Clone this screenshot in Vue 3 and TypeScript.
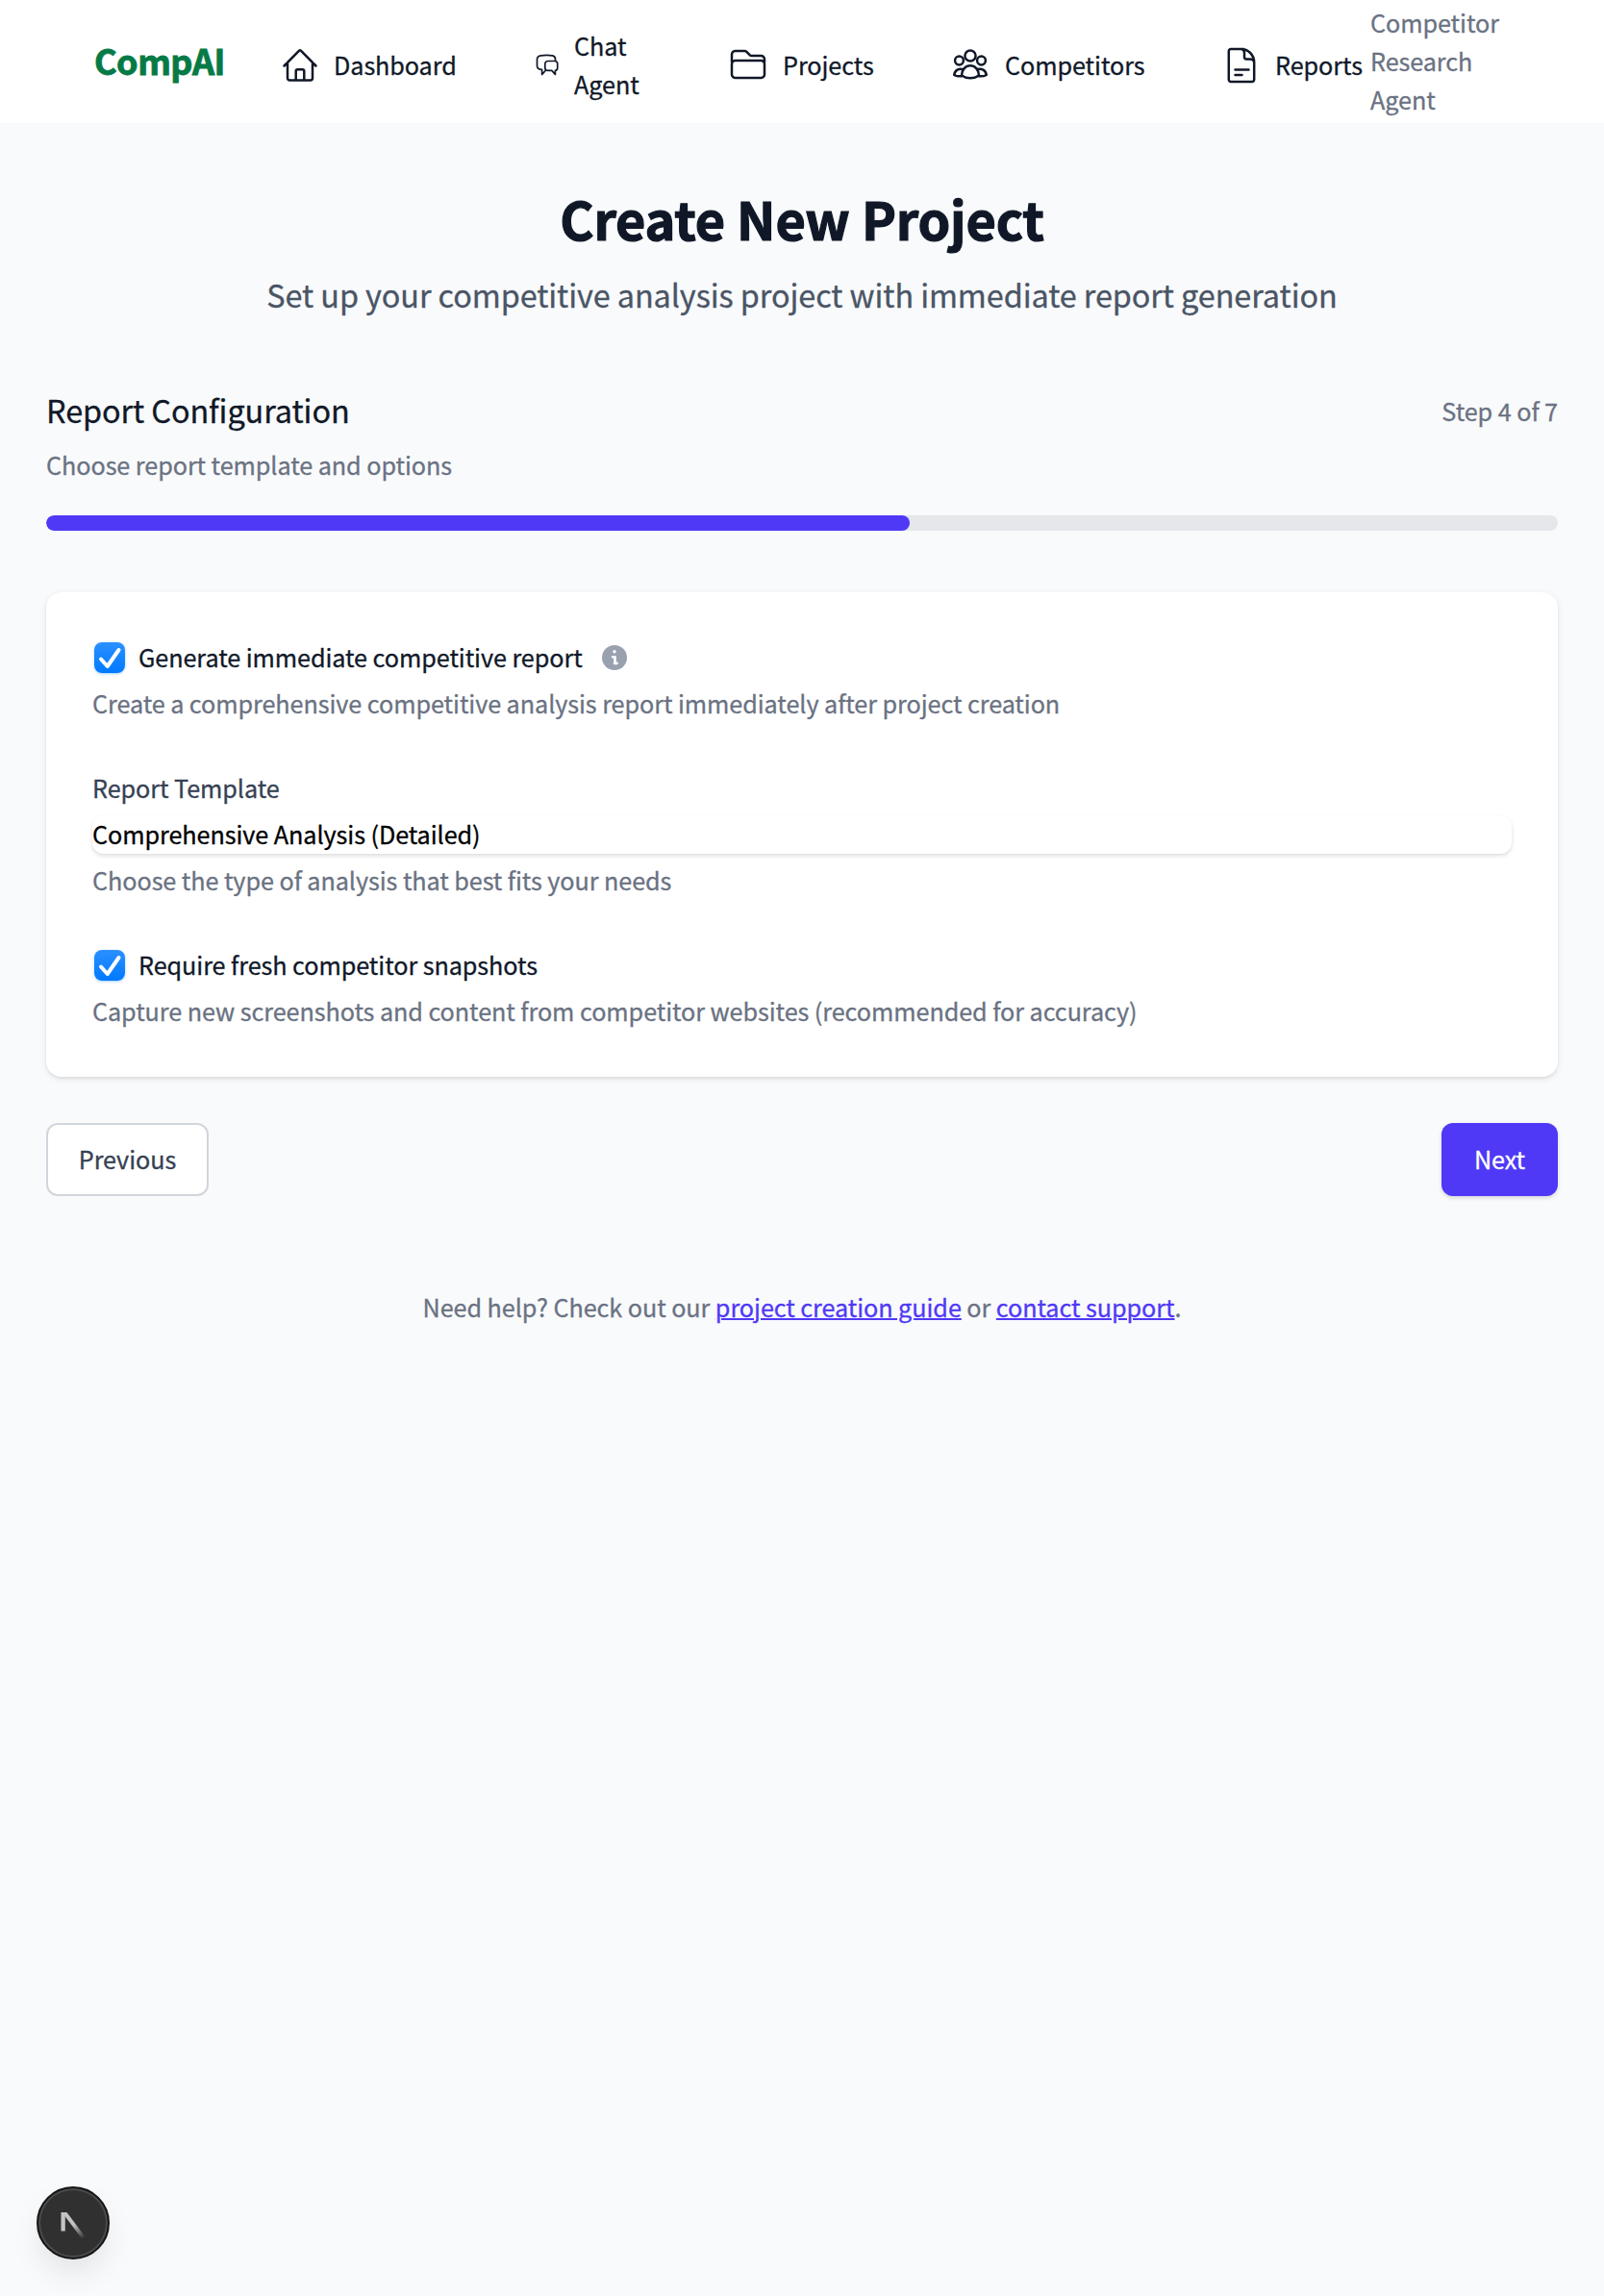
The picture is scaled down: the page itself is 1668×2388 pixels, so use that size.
<script setup lang="ts">
import { ref, computed } from 'vue'

const step = ref(4)
const total = 7
const progress = computed(() => `${(step.value / total) * 100}%`)
const generateReport = ref(true)
const freshSnapshots = ref(true)
</script>

<template>
  <div class="page">
    <header class="bar">
      <a class="logo">CompAI</a>
      <nav class="nav">
        <a class="item dashboard">
          <svg width="36" height="36" viewBox="0 0 36 36"><path d="M1.5 18.5 16.9 2.8a1.6 1.6 0 0 1 2.2 0L34.500 18.500M5 15v16.200a2.200 2.200 0 0 0 2.200 2.200h21.600a2.200 2.200 0 0 0 2.200-2.200V15M13.700 33V24a1.800 1.800 0 0 1 1.800-1.800h5a1.800 1.800 0 0 1 1.800 1.800v9" /></svg>
          <span>Dashboard</span>
        </a>
        <a class="item chat">
          <svg width="24" height="24" viewBox="0 0 24 24"><path d="M20.500 7.500V5.500c0-2-1-3.400-3-3.700a42 42 0 0 0-12 0c-2.400.3-4 1.800-4 3.900v6.600c0 2.100 1.500 3.600 3.500 3.900l1.600.2v5.100l3.200-3.600M13 7.500h7c1.600 0 2.700 1.200 2.700 2.700v4.500c0 1.500-.9 2.600-2.300 2.700v4l-3.600-4h-4c-1.800 0-3-1.100-3-2.700v-4.500c0-1.500 1.300-2.700 3.200-2.700Z" /></svg>
          <span>Chat<br />Agent</span>
        </a>
        <a class="item projects">
          <svg width="38" height="36" viewBox="0 0 38 36"><path d="M2 14.500V6.500a3.500 3.500 0 0 1 3.500-3.500h9.800a3 3 0 0 1 2.100.9l3.200 3.200a3 3 0 0 0 2.100.9h9.800A3.500 3.500 0 0 1 36 11.500v3M5.500 13h27a3.500 3.500 0 0 1 3.500 3.500V27.500a3.500 3.500 0 0 1-3.500 3.500h-27A3.500 3.500 0 0 1 2 27.500v-11A3.500 3.500 0 0 1 5.500 13Z" /></svg>
          <span>Projects</span>
        </a>
        <a class="item competitors">
          <svg width="38" height="36" viewBox="0 0 38 36"><circle cx="19" cy="8" r="5.600" /><circle cx="7.500" cy="13" r="4.400" /><circle cx="30.500" cy="13" r="4.400" /><path d="M10 28.500c.3-6.200 4-10.200 9-10.200s8.700 4 9 10.200c-5.400 3.800-12.600 3.800-18 0ZM12.200 22.200C7 20.500 3 23 2.200 28c2.500 1.300 5 1.600 7.800 1.200M25.800 22.200C31 20.500 35 23 35.800 28c-2.500 1.300-5 1.600-7.800 1.200" /></svg>
          <span>Competitors</span>
        </a>
        <a class="item reports">
          <svg width="30" height="38" viewBox="0 0 30 38"><path d="M17 2H4a2.200 2.200 0 0 0-2.200 2.200v29.600A2.200 2.200 0 0 0 4 36h22a2.200 2.200 0 0 0 2.200-2.200V16C28.200 8 22 2 14.500 2c2.200 0 3.500 1.600 3.500 3.800v4.500a2.200 2.200 0 0 0 2.200 2.200h3.600c2.300 0 4.400 1.600 4.400 4M8.500 23.500h14M8.500 29h7" /></svg>
          <span>Reports</span>
        </a>
      </nav>
      <div class="tagline">Competitor<br />Research<br />Agent</div>
    </header>

    <main class="main">
      <h1>Create New Project</h1>
      <p class="sub">Set up your competitive analysis project with immediate report generation</p>

      <section class="steps">
        <div class="steps-head">
          <h2>Report Configuration</h2>
          <span class="count">Step {{ step }} of {{ total }}</span>
        </div>
        <p class="muted">Choose report template and options</p>
        <div class="track"><div class="fill" :style="{ width: progress }"></div></div>
      </section>

      <section class="card">
        <div class="field">
          <label class="check">
            <input v-model="generateReport" type="checkbox" />
            <span class="box"><svg v-if="generateReport" width="32" height="32" viewBox="0 0 32 32"><path d="M7 17.500 13.700 25 25.500 8" /></svg></span>
            <span class="ctext">Generate immediate competitive report</span>
            <svg class="info" width="26" height="26" viewBox="0 0 26 26"><circle cx="13" cy="13" r="13" /><path d="M11 12.200h2.500v6.600M13 18.900h2.500" /><circle class="dot" cx="13" cy="6.700" r="1.700" /></svg>
          </label>
          <p class="muted">Create a comprehensive competitive analysis report immediately after project creation</p>
        </div>
        <div class="field">
          <p class="flabel">Report Template</p>
          <div class="select">Comprehensive Analysis (Detailed)</div>
          <p class="muted">Choose the type of analysis that best fits your needs</p>
        </div>
        <div class="field">
          <label class="check">
            <input v-model="freshSnapshots" type="checkbox" />
            <span class="box"><svg v-if="freshSnapshots" width="32" height="32" viewBox="0 0 32 32"><path d="M7 17.500 13.700 25 25.500 8" /></svg></span>
            <span class="ctext">Require fresh competitor snapshots</span>
          </label>
          <p class="muted">Capture new screenshots and content from competitor websites (recommended for accuracy)</p>
        </div>
      </section>

      <div class="actions">
        <button class="prev">Previous</button>
        <button class="next">Next</button>
      </div>

      <p class="help">Need help? Check out our <a>project creation guide</a> or <a>contact support</a>.</p>
    </main>

    <button class="dev" aria-label="Open dev tools">
      <svg width="40" height="40" viewBox="0 0 40 40">
        <defs>
          <linearGradient id="slash" gradientUnits="userSpaceOnUse" x1="16" y1="16" x2="31" y2="36">
            <stop offset="0.3" stop-color="#c4c4c4" /><stop offset="1" stop-color="#c4c4c4" stop-opacity="0" />
          </linearGradient>
        </defs>
        <path d="M7.500 9h4.300v19.500H7.500z" fill="#c4c4c4" />
        <path d="M8.500 9h5L33 35l-3.200 2.300Z" fill="url(#slash)" />
      </svg>
    </button>
  </div>
</template>

<style>
body {
  margin: 0;
  background: #f9fafb;
}
</style>

<style scoped>
.page {
  box-sizing: border-box;
  width: 1668px;
  height: 2388px;
  background: #f9fafc;
  color: #101828;
  font-family: "Noto Sans CJK SC", "Noto Sans", sans-serif;
  font-size: 25.2px;
  letter-spacing: -0.065px;
  line-height: 40px;
  -webkit-text-stroke-width: 0.3px;
  overflow: hidden;
}
h1, h2, p {
  margin: 0;
}
.bar {
  box-sizing: border-box;
  display: flex;
  align-items: center;
  height: 128px;
  padding-left: 98px;
  background: #fff;
}
.logo {
  width: 196px;
  color: #067a46;
  font-size: 36px;
  font-weight: 700;
  letter-spacing: -0.5px;
  -webkit-text-stroke-width: 0.9px;
  padding-bottom: 4px;
}
.nav {
  display: flex;
  align-items: center;
  padding-top: 6px;
}
.item {
  display: flex;
  align-items: center;
  white-space: nowrap;
}
.item svg {
  flex: none;
  margin-top: 2px;
  fill: none;
  stroke: #101828;
  stroke-width: 2.5;
  stroke-linecap: round;
  stroke-linejoin: round;
}
.dashboard { width: 263px; gap: 17px; }
.chat { width: 202px; gap: 16px; }
.chat svg { stroke-width: 1.7; }
.projects { width: 231px; gap: 17px; }
.competitors { width: 286px; gap: 17px; }
.reports { width: 149px; gap: 20px; }
.tagline {
  color: #6a7282;
  padding-bottom: 2px;
}
.main {
  padding: 57px 48px 0;
}
h1 {
  text-align: center;
  font-size: 54px;
  line-height: 84px;
  font-weight: 700;
  letter-spacing: -0.17px;
  -webkit-text-stroke-width: 1.2px;
}
.sub {
  margin-top: 9px;
  text-align: center;
  color: #4a5565;
  font-size: 32.4px;
  letter-spacing: -0.083px;
  line-height: 56px;
}
.steps {
  margin-top: 64px;
}
.steps-head {
  display: flex;
  justify-content: space-between;
  align-items: center;
  height: 56px;
}
h2 {
  font-size: 32.4px;
  letter-spacing: -0.083px;
  line-height: 56px;
  font-weight: 400;
}
.count {
  color: #6a7282;
  padding-top: 2px;
}
.steps .muted {
  margin-top: 9px;
}
.muted {
  color: #6a7282;
}
.track {
  margin-top: 33px;
  height: 16px;
  border-radius: 8px;
  background: #e5e7eb;
  overflow: hidden;
}
.fill {
  height: 16px;
  border-radius: 8px;
  background: #4f39f6;
}
.card {
  box-sizing: border-box;
  height: 504px;
  margin-top: 64px;
  padding: 47px 48px 0;
  background: #fff;
  border-radius: 16px;
  box-shadow: 0 2px 6px rgba(0, 0, 0, 0.1), 0 2px 4px -2px rgba(0, 0, 0, 0.1);
}
.field {
  margin-bottom: 48px;
}
.field .muted {
  margin-top: 8px;
}
.check {
  display: flex;
  align-items: center;
  height: 40px;
  padding-left: 2px;
}
.check input {
  display: none;
}
.box {
  width: 32px;
  height: 32px;
  margin-top: 2px;
  border-radius: 8px;
  background: linear-gradient(#2b90ff, #007aff);
  box-shadow: 0 1px 3px rgba(0, 122, 255, 0.35);
}
.box svg {
  display: block;
  fill: none;
  stroke: #fff;
  stroke-width: 4;
  stroke-linecap: round;
  stroke-linejoin: round;
}
.ctext {
  margin-left: 14px;
}
.info {
  margin: 2px 0 0 20px;
  fill: #99a1af;
}
.info path {
  fill: none;
  stroke: #fff;
  stroke-width: 2.6;
  stroke-linecap: round;
  stroke-linejoin: round;
}
.info .dot {
  fill: #fff;
}
.flabel {
  color: #364153;
}
.select {
  margin-top: 9px;
  height: 40px;
  line-height: 38px;
  color: #000;
  border-radius: 12px;
  box-shadow: 0 2px 4px rgba(0, 0, 0, 0.14);
}
.select + .muted {
  margin-top: 7px;
}
.actions {
  display: flex;
  justify-content: space-between;
  margin-top: 48px;
}
button {
  box-sizing: border-box;
  font: inherit;
  letter-spacing: inherit;
  padding: 0 0 2px;
}
.prev, .next {
  height: 76px;
  border-radius: 12px;
}
.prev {
  width: 169px;
  color: #364153;
  background: #fff;
  border: 2px solid #d1d5dc;
}
.next {
  width: 121px;
  color: #fff;
  background: #4f39f6;
  border: 0;
  box-shadow: 0 2px 4px rgba(0, 0, 0, 0.14);
}
.help {
  margin-top: 95px;
  text-align: center;
  color: #6a7282;
}
.help a {
  color: #4f39f6;
  text-decoration: underline;
  text-decoration-thickness: 2px;
}
.dev {
  position: fixed;
  left: 38px;
  bottom: 38px;
  width: 76px;
  height: 76px;
  padding: 0;
  display: flex;
  align-items: center;
  justify-content: center;
  border: 2px solid #171717;
  border-radius: 50%;
  background: #303030;
  box-shadow: inset 0 0 0 2px #4b4b4b, 0 16px 32px -4px rgba(0, 0, 0, 0.1);
}
</style>
